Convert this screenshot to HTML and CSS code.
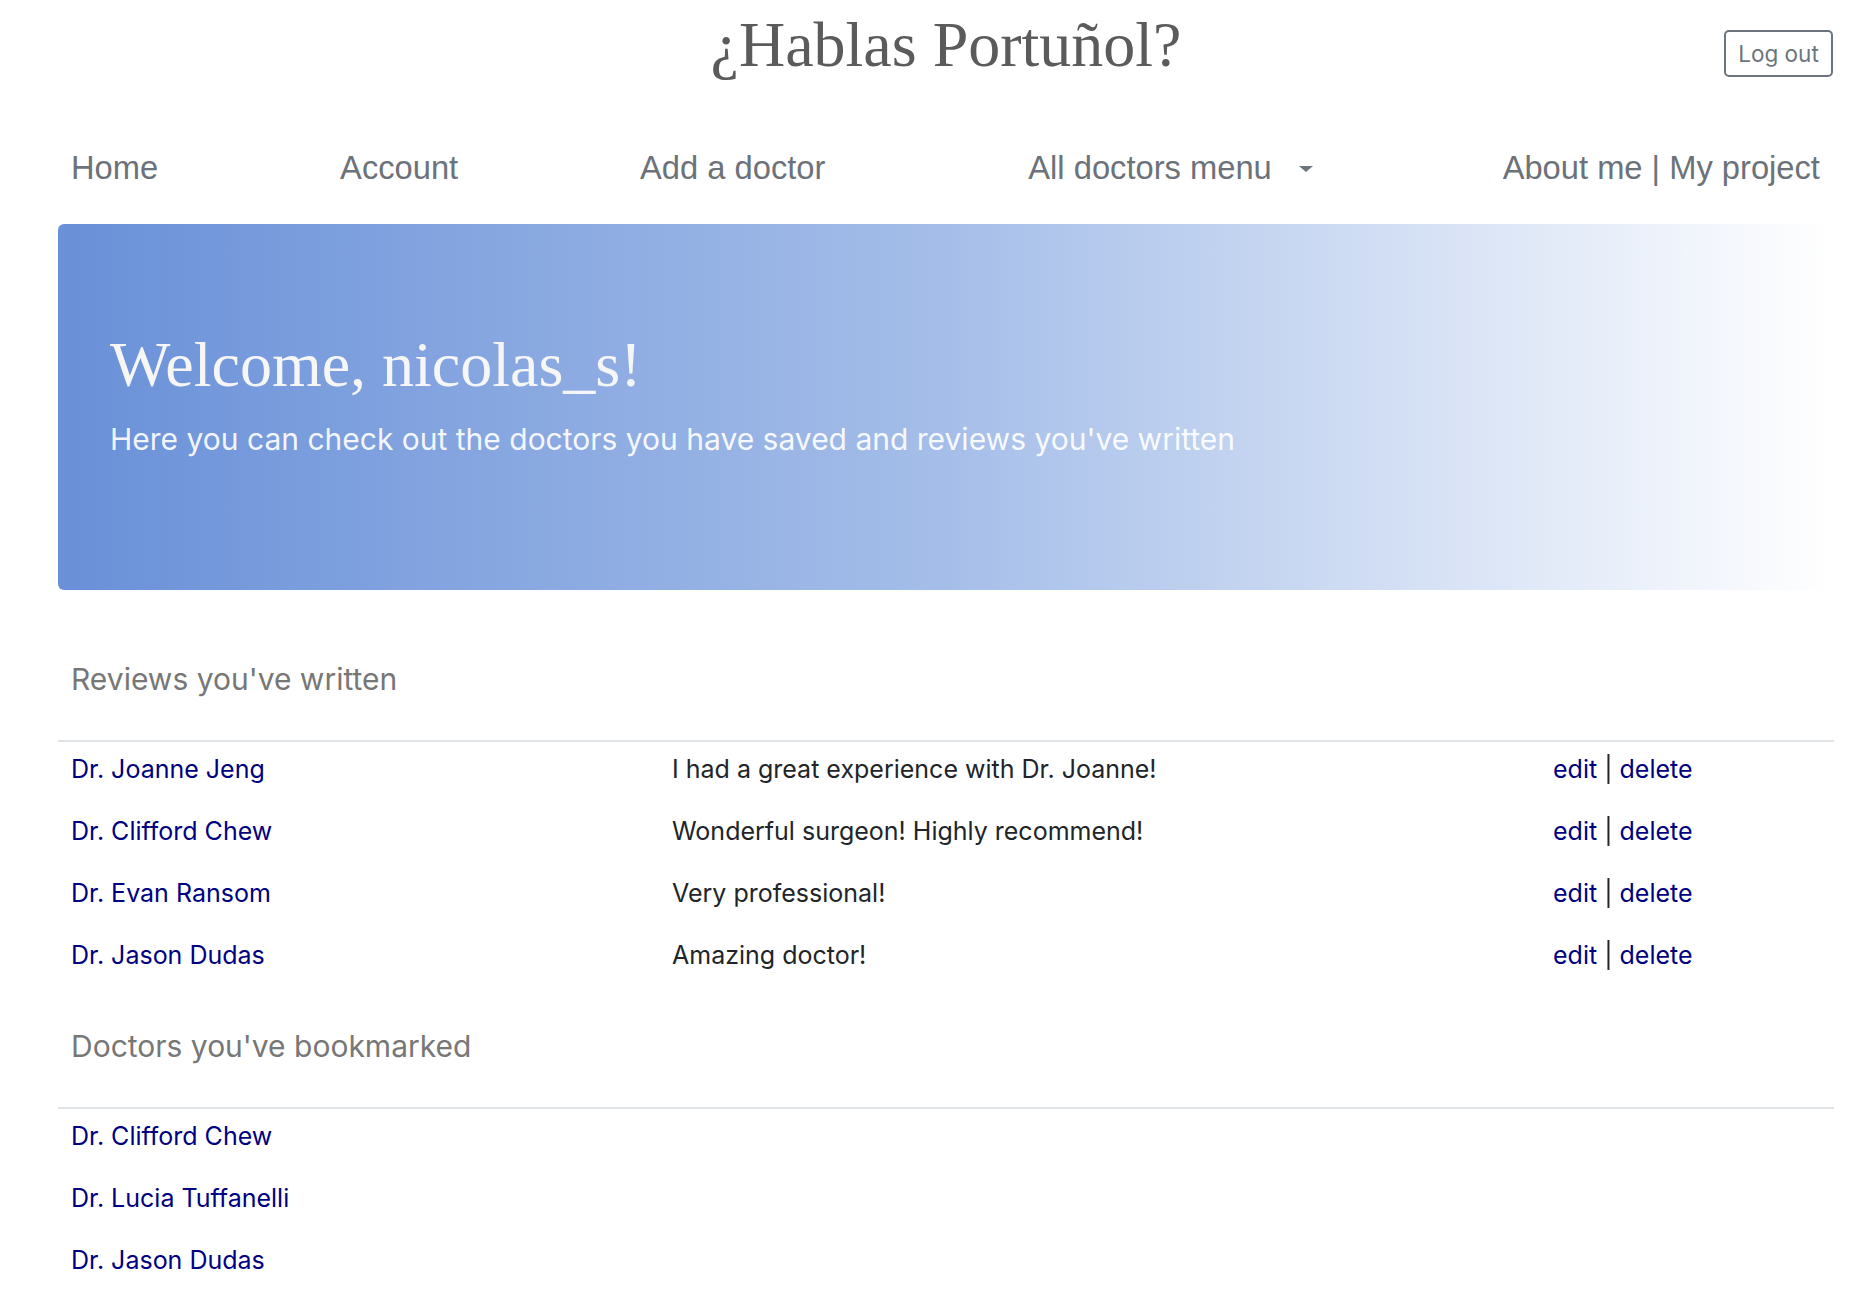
FILE: index.html
```html
<!DOCTYPE html>
<html lang="en">
<head>
<meta charset="utf-8">
<title>¿Hablas Portuñol?</title>
<link rel="stylesheet" href="styles.css">
</head>
<body>
<div class="page">
  <header class="masthead">
    <div class="masthead-side"></div>
    <h1 class="site-title">¿Hablas Portuñol?</h1>
    <div class="masthead-side masthead-right">
      <button class="btn-logout" type="button">Log out</button>
    </div>
  </header>

  <nav class="mainnav">
    <a class="nav-link" href="#">Home</a>
    <a class="nav-link" href="#">Account</a>
    <a class="nav-link" href="#">Add a doctor</a>
    <a class="nav-link nav-dropdown" href="#">All doctors menu<span class="caret"></span></a>
    <a class="nav-link" href="#">About me | My project</a>
  </nav>

  <section class="jumbotron">
    <h2 class="jumbo-title">Welcome, nicolas_s!</h2>
    <p class="jumbo-lead">Here you can check out the doctors you have saved and reviews you've written</p>
  </section>

  <section class="block">
    <h3 class="block-title">Reviews you've written</h3>
    <div class="rows">
      <div class="review-row">
        <a class="doc-link" href="#">Dr. Joanne Jeng</a>
        <span class="review-text">I had a great experience with Dr. Joanne!</span>
        <span class="actions"><a href="#">edit</a> | <a href="#">delete</a></span>
      </div>
      <div class="review-row">
        <a class="doc-link" href="#">Dr. Clifford Chew</a>
        <span class="review-text">Wonderful surgeon! Highly recommend!</span>
        <span class="actions"><a href="#">edit</a> | <a href="#">delete</a></span>
      </div>
      <div class="review-row">
        <a class="doc-link" href="#">Dr. Evan Ransom</a>
        <span class="review-text">Very professional!</span>
        <span class="actions"><a href="#">edit</a> | <a href="#">delete</a></span>
      </div>
      <div class="review-row">
        <a class="doc-link" href="#">Dr. Jason Dudas</a>
        <span class="review-text">Amazing doctor!</span>
        <span class="actions"><a href="#">edit</a> | <a href="#">delete</a></span>
      </div>
    </div>
  </section>

  <section class="block block-second">
    <h3 class="block-title">Doctors you've bookmarked</h3>
    <div class="rows">
      <div class="bookmark-row"><a class="doc-link" href="#">Dr. Clifford Chew</a></div>
      <div class="bookmark-row"><a class="doc-link" href="#">Dr. Lucia Tuffanelli</a></div>
      <div class="bookmark-row"><a class="doc-link" href="#">Dr. Jason Dudas</a></div>
    </div>
  </section>
</div>
</body>
</html>
```

FILE: styles.css
```css
* { box-sizing: border-box; }

html, body {
  margin: 0;
  padding: 0;
  background: #ffffff;
}

body {
  font-family: "Inter", "Liberation Sans", sans-serif;
  color: #212529;
}

.page {
  margin: 0 40px 0 58px;
}

a { text-decoration: none; }

/* Header */
.masthead {
  display: grid;
  grid-template-columns: 1fr auto 1fr;
  align-items: start;
  padding-top: 13px;
  height: 100px;
}

.site-title {
  margin: 0;
  font-family: "Liberation Serif", "Times New Roman", serif;
  font-weight: normal;
  font-size: 64px;
  line-height: 64px;
  color: #5b5b5b;
}

.masthead-right {
  display: flex;
  justify-content: flex-end;
}

.btn-logout {
  margin-top: 17px;
  margin-right: 1px;
  width: 109px;
  height: 47px;
  border: 2px solid #6c757d;
  border-radius: 5px;
  background: #fff;
  color: #6c757d;
  font-family: "Inter", "Liberation Sans", sans-serif;
  font-size: 22.5px;
  padding: 0;
}

/* Nav */
.mainnav {
  display: flex;
  justify-content: space-between;
  align-items: center;
  padding: 49px 0 37px;
}

.nav-link {
  font-family: "Liberation Sans", Arial, sans-serif;
  font-size: 32.7px;
  line-height: 38px;
  color: #6c7279;
  padding: 0 14px 0 13px;
}

.nav-dropdown {
  display: flex;
  align-items: center;
  padding-left: 34px;
  padding-right: 22px;
}

.caret {
  display: inline-block;
  margin-left: 27px;
  margin-top: 2px;
  width: 0;
  height: 0;
  border-top: 6px solid #6c757d;
  border-left: 7px solid transparent;
  border-right: 7px solid transparent;
}

/* Jumbotron */
.jumbotron {
  height: 366px;
  border-radius: 6px;
  padding: 106px 52px 0;
  background: linear-gradient(to right, #6990d8 0%, #a5bee9 50%, #ffffff 100%);
}

.jumbo-title {
  margin: 0;
  font-family: "Liberation Serif", "Times New Roman", serif;
  font-weight: normal;
  font-size: 64px;
  line-height: 69px;
  color: #f6f6f6;
}

.jumbo-lead {
  margin: 21px 0 0;
  font-size: 30px;
  line-height: 38px;
  color: rgba(255, 255, 255, 0.93);
}

/* Sections */
.block {
  margin-top: 70px;
}

.block-second {
  margin-top: 53px;
}

.block-title {
  margin: 0;
  padding-left: 13px;
  font-weight: normal;
  font-size: 30px;
  line-height: 38px;
  color: #777777;
  padding-bottom: 42px;
  border-bottom: 2px solid #e1e4e7;
}

.rows {
  display: flex;
  flex-direction: column;
  gap: 24px;
  padding-top: 8px;
}

.review-row {
  display: grid;
  grid-template-columns: 601fr 881fr 294fr;
  font-size: 25px;
  line-height: 38px;
}

.review-row > * {
  padding-left: 13px;
}

.review-text {
  padding-left: 13px !important;
  color: #212529;
}

.doc-link, .actions a {
  color: #000082;
}

.actions {
  color: #212529;
}

.bookmark-row {
  font-size: 25px;
  line-height: 38px;
  padding-left: 13px;
}
```
